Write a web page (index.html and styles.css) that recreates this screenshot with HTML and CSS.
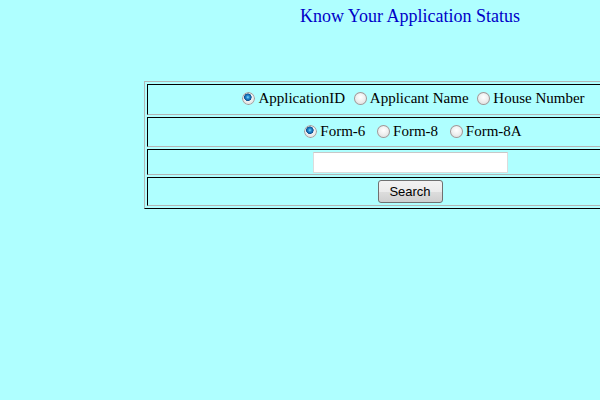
FILE: index.html
```html
<!DOCTYPE html>
<html>
<head>
<meta charset="utf-8">
<title>Know Your Application Status</title>
<link rel="stylesheet" href="styles.css">
</head>
<body>
<div class="page">
  <h1 class="title">Know Your Application Status</h1>
  <table class="search-table">
    <tr class="row row-type">
      <td>
        <label class="opt"><input type="radio" name="by" checked><span>ApplicationID</span></label>
        <label class="opt"><input type="radio" name="by"><span>Applicant Name</span></label>
        <label class="opt"><input type="radio" name="by"><span>House Number</span></label>
      </td>
    </tr>
    <tr class="row row-form">
      <td>
        <label class="opt"><input type="radio" name="form" checked><span>Form-6</span></label>
        <label class="opt"><input type="radio" name="form"><span>Form-8</span></label>
        <label class="opt"><input type="radio" name="form"><span>Form-8A</span></label>
      </td>
    </tr>
    <tr class="row row-input">
      <td><input type="text" class="query"></td>
    </tr>
    <tr class="row row-btn">
      <td><button class="btn">Search</button></td>
    </tr>
  </table>
</div>
</body>
</html>
```
FILE: styles.css
```css
html {
  overflow: hidden;
  background: #afffff;
}
body {
  margin: 0;
  background: #afffff;
  font-family: "Liberation Serif", "Times New Roman", serif;
  font-size: 15px;
  color: #000;
}
.page {
  width: 820px;
}
.title {
  margin: 0;
  padding-top: 5px;
  height: 81px;
  box-sizing: border-box;
  text-align: center;
  font-weight: normal;
  font-size: 18px;
  line-height: 22px;
  color: #0000c8;
}
.search-table {
  width: 532px;
  margin: 0 auto;
  border-collapse: separate;
  border-spacing: 2px;
  border: 1px solid;
  border-color: #b4b4b4 #000 #000 #b4b4b4;
}
.search-table td {
  border: 1px solid;
  border-color: #000 #b4b4b4 #b4b4b4 #000;
  padding: 0;
  text-align: center;
  vertical-align: middle;
}
.row-type td { height: 29px; padding-left: 7px; }
.row-form td { height: 28px; padding-left: 6px; }
.row-input td { height: 24px; }
.row-btn td { height: 27px; }

.opt {
  display: inline-flex;
  align-items: center;
  margin: 0;
}
.opt input[type=radio] {
  appearance: none;
  -webkit-appearance: none;
  width: 13px;
  height: 13px;
  margin: 0 3px 0 5px;
  border-radius: 50%;
  background: radial-gradient(circle at 50% 40%, #ffffff 0, #eeeeee 45%, #cfcfcf 100%);
  box-shadow: inset 0 0 0 1px #9a9a9a;
}
.opt:first-child input[type=radio] {
  margin-left: 0;
}
.row-form .opt input[type=radio] {
  margin-left: 8px;
}
.row-form .opt:first-child input[type=radio] {
  margin-left: 0;
}
.opt input[type=radio]:checked {
  background:
    radial-gradient(circle at 45% 40%, #8fdcf8 0, #2592d8 1.5px, #0b4f8f 3.5px, transparent 4px),
    radial-gradient(circle at 50% 40%, #ffffff 0, #eeeeee 45%, #cfcfcf 100%);
}
.query {
  width: 195px;
  height: 21px;
  box-sizing: border-box;
  border: 1px solid #dcdcdc;
  border-top-color: #c8c8c8;
  background: #fff;
  margin: 0;
  padding: 0;
  vertical-align: middle;
}
.btn {
  width: 65px;
  height: 23px;
  font-family: "Liberation Sans", Arial, sans-serif;
  font-size: 13px;
  color: #000;
  border: 1px solid #707070;
  border-radius: 3px;
  background: linear-gradient(#f2f2f2 0, #ebebeb 50%, #dddddd 51%, #cfcfcf 100%);
  padding: 0;
  margin: 0;
  vertical-align: middle;
}
```
